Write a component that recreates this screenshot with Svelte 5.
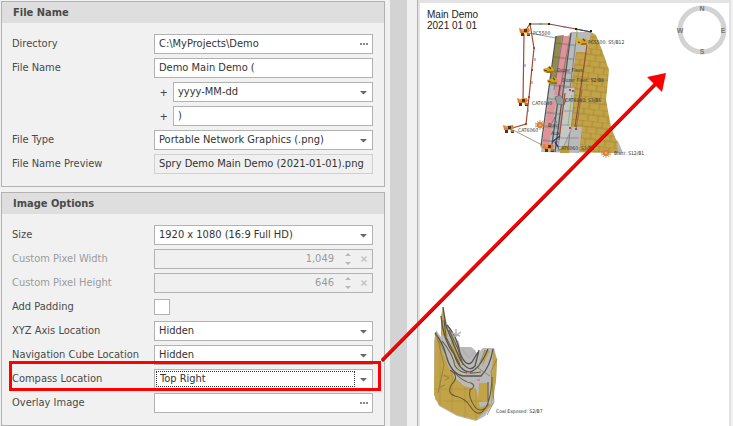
<script>
  let directory = $state('C:\\MyProjects\\Demo');
  let prefix = $state('Demo Main Demo (');
  let suffix = $state(')');
  let overlay = $state('');

  const locations = ['Hidden', 'Top Left', 'Top Right', 'Bottom Left', 'Bottom Right'];
  const placements = [
    { id: 'axis', label: 'XYZ Axis Location', value: 'Hidden' },
    { id: 'cube', label: 'Navigation Cube Location', value: 'Hidden' },
    { id: 'compass', label: 'Compass Location', value: 'Top Right', active: true }
  ];
  const customSizes = [
    { id: 'pixel-width', label: 'Custom Pixel Width', value: '1,049' },
    { id: 'pixel-height', label: 'Custom Pixel Height', value: '646' }
  ];

  const trucks = [[525, 32], [523, 102], [509, 129], [549, 148]];
  const dozers = [[549, 70], [553, 81], [583, 42]];
  const blasts = [[540, 125], [606, 153]];
  const tags = [
    [533, 35, 'PC5500'], [588, 44, 'PC5500: S5/B12'], [557, 72, 'Dozer Fleet'],
    [562, 82, 'Dozer Fleet: S2/B8'], [532, 105, 'CAT6040'], [565, 102, 'CAT6040: S3/B6'],
    [518, 132, 'CAT6060'], [548, 127, 'Blast'], [551, 135, 'Aux'],
    [558, 150, 'CAT6060: S3/B1'], [614, 155, 'Blast: S12/B1'], [496, 413, 'Coal Exposed: S2/B7']
  ];
</script>

{#snippet chevron()}
  <svg class="icon" viewBox="0 0 16 18" aria-hidden="true"><path d="M4 8h7l-3.500 3.500z" fill="#666" /></svg>
{/snippet}

{#snippet dots()}
  <button class="icon" type="button" aria-label="Browse">
    <svg viewBox="0 0 16 18" aria-hidden="true"><path d="M4 8h2v2h-2zM7 8h2v2h-2zM10 8h2v2h-2z" fill="#888" /></svg>
  </button>
{/snippet}

<div class="stage">
  <form class="options">
    <section>
      <h2>File Name</h2>
      <div class="rows">
        <div class="row">
          <label for="directory">Directory</label>
          <div class="field"><input id="directory" bind:value={directory} />{@render dots()}</div>
        </div>
        <div class="row">
          <label for="prefix">File Name</label>
          <div class="field"><input id="prefix" bind:value={prefix} /></div>
        </div>
        <div class="row">
          <label class="plus" for="date-format">+</label>
          <div class="field">
            <select id="date-format"><option>yyyy-MM-dd</option></select>{@render chevron()}
          </div>
        </div>
        <div class="row">
          <label class="plus" for="suffix">+</label>
          <div class="field"><input id="suffix" bind:value={suffix} /></div>
        </div>
        <div class="row">
          <label for="file-type">File Type</label>
          <div class="field">
            <select id="file-type"><option>Portable Network Graphics (.png)</option></select>{@render chevron()}
          </div>
        </div>
        <div class="row">
          <label for="preview">File Name Preview</label>
          <div class="field readonly"><input id="preview" readonly value="Spry Demo Main Demo (2021-01-01).png" /></div>
        </div>
      </div>
    </section>

    <section>
      <h2>Image Options</h2>
      <div class="rows">
        <div class="row">
          <label for="size">Size</label>
          <div class="field">
            <select id="size"><option>1920 x 1080 (16:9 Full HD)</option></select>{@render chevron()}
          </div>
        </div>
        {#each customSizes as item}
          <div class="row disabled">
            <label for={item.id}>{item.label}</label>
            <div class="field">
              <input id={item.id} disabled value={item.value} />
              <svg class="spin" viewBox="0 0 32 18" aria-hidden="true">
                <path d="M5 6h6l-3-3zM5 12h6l-3 3z" fill="#b8b8b8" />
                <path d="M21.500 6.500l5 5M26.500 6.500l-5 5" stroke="#c4c4c4" stroke-width="1.500" />
              </svg>
            </div>
          </div>
        {/each}
        <div class="row">
          <label for="padding">Add Padding</label>
          <input id="padding" class="check" type="checkbox" />
        </div>
        {#each placements as item}
          <div class="row">
            <label for={item.id}>{item.label}</label>
            <div class="field" class:active={item.active}>
              <select id={item.id} value={item.value}>
                {#each locations as place}<option>{place}</option>{/each}
              </select>{@render chevron()}
            </div>
            {#if item.active}<span class="highlight"></span>{/if}
          </div>
        {/each}
        <div class="row">
          <label for="overlay">Overlay Image</label>
          <div class="field"><input id="overlay" bind:value={overlay} />{@render dots()}</div>
        </div>
      </div>
    </section>
  </form>

  <div class="splitter"></div>

  <main>
    <div class="canvas">
      <p>Main Demo<br />2021 01 01</p>
      <svg class="scene" viewBox="420 3 309 423" preserveAspectRatio="xMinYMin meet" role="img" aria-label="Mine plan">
        <defs>
          <pattern id="blocks" width="10" height="12" patternUnits="userSpaceOnUse" patternTransform="rotate(7)">
            <path d="M0 0H10M3 0V6M0 6H10M8 6V12" fill="none" stroke="#8b7426" stroke-width=".5" />
          </pattern>
          <pattern id="cells" width="40" height="14" patternUnits="userSpaceOnUse" patternTransform="rotate(7)">
            <path d="M0 3H40" stroke="#555" stroke-width=".6" />
          </pattern>
        </defs>

        <!-- open pit strips -->
        <path d="M609 135L618 141L623 153H604Z" fill="#b5b5b5" />
        <path d="M577 32L591 32L596 35L602 50L609 70L606 100L611 127L617 142L618 153L561 152Z" fill="#c2a347" />
        <path d="M577 32L591 32L596 35L602 50L609 70L606 100L611 127L617 142L618 153L561 152Z" fill="url(#blocks)" />
        <path d="M571 32H591L587 52H576L566 127H582L579 153L541 152L542 145L556 36L568 36Z" fill="#b9babb" />
        <path d="M556 36L564 35L556 84L550 84Z" fill="#918b4d" />
        <path d="M562 36L570 36L562 95L554 95Z" fill="#df9297" />
        <path d="M549 101L556 101L549 145L542 145Z" fill="#df9297" />
        <path d="M556 36L570 36L571 32H577L561 152H541Z" fill="url(#cells)" />
        <path d="M556 36L541 146M571 33L555 152M560 85L551 152" fill="none" stroke="#555" stroke-width="1.300" />
        <path d="M563 36L554 90M570 37L559 95M577 33L562 152M574 88L568 151M582 90L576 130" fill="none" stroke="#666" stroke-width=".7" />
        <path d="M564 88L575 87L571 130L562 150L558 151Z" fill="#c5c6c7" stroke="#777" stroke-width=".5" />
        <path d="M565 99H573M564 111H572M562 125H570M560 138H579" stroke="#777" stroke-width=".6" />
        <path d="M555 97l5-2 3 4 3 1-2 5-7-1zM554 117l3 6M556 115l-4 8" fill="#999" stroke="#666" stroke-width=".7" />
        <path d="M561 146H570L569 153H560ZM540 147L546 144L546 150Z" fill="#b99a3d" />

        <!-- haul roads -->
        <path d="M530 24L549 24" stroke="#718348" stroke-width="1.200" />
        <path d="M549 24L576 29L591 32" fill="none" stroke="#8b4a39" stroke-width="1.200" />
        <path d="M576 29L591 32" stroke="#294d69" stroke-width="1.200" />
        <path d="M525 31L530 24L534 48L529 97L526 124L509 129M524 34L523 102M587 45L575 127M565 93L559 140" fill="none" stroke="#a14b2f" stroke-width="1.200" />
        <path d="M577 30L577 41M572 95L568 125" stroke="#94b84d" stroke-width="1" />
        <path d="M552 142L560 136M555 142L558 147" stroke="#263f83" stroke-width="1.500" />
        <path d="M525 64v3M535 58v3M532 81v3M528 109v3M582 85v3M539 24h3M563 27h3" stroke="#6677ee" stroke-width="1" />
        <path d="M534 47v2M532 69v2M529 96v2M526 123v2M569 90h2M572 91h2M569 128h2M575 129h2" stroke="#b92020" stroke-width="1.500" />
        <path d="M529 24h2M548 24h2M575 29h2M590 31h2" stroke="#222" stroke-width="2" />
        <path d="M529 33L556 38M513 130L542 145" stroke="#555" stroke-width=".6" />

        {#each trucks as [x, y]}
          <g transform="translate({x} {y})">
            <path d="M-6-4L-3-3L4-4L5-1L3 1H-5Z" fill="#e57f23" />
            <path d="M-4 1h3v3h-3zM2 1h3v3H2zM-1-3h3v3h-3z" fill="#493528" />
            <path d="M-4-2h3M1 2h4" stroke="#f6b25c" />
          </g>
        {/each}
        {#each dozers as [x, y]}
          <g transform="translate({x} {y})">
            <path d="M-6-1L-2-2L0-4L3-3L5-1L4 3H-2L-5 2Z" fill="#d3a11c" />
            <path d="M-2 2H4M0-3L2-1M-5 0L-2 1" stroke="#5c4716" stroke-width="1.200" />
          </g>
        {/each}
        <path d="M576 43L577 38L580 40L581 44" fill="none" stroke="#dbb020" stroke-width="1.500" />
        {#each blasts as [x, y]}
          <g transform="translate({x} {y})">
            <path d="M-5 0H5M0-5V5M-3-4L3 4M3-4L-3 4M-5-2L5 2M-5 2L5-2" stroke="#bd8052" stroke-width=".8" />
            <circle r="3" fill="#d77b35" /><circle r="1.500" fill="#f5a34f" />
          </g>
        {/each}

        <!-- coal seam -->
        <path d="M443 307L447 324L451 329L453 335L459 342L460 347H471L475 350L477 354L483 348H494L497 359L496 379L493 404L485 416L476 421L457 416L439 406L434 395L434 342L436 330L441 337L441 316Z" fill="#b9b9b9" />
        <path d="M443 307L446 328L448 337L441 335L441 318ZM435 332L443 345L449 367L455 378L464 386L476 389L480 407L491 404L493 348L497 360L496 381L491 406L476 420L457 415L439 405L434 394Z" fill="#c2a347" />
        <path d="M443 337L453 341L464 365L459 376L450 370L441 347Z" fill="#b9b9b9" />
        <path d="M451 330L456 349L460 359L459 369L451 345ZM479 383L488 383L487 402L478 402ZM485 350L490 351L482 367Z" fill="#c2a347" />
        <path d="M440 376H452M435 389H476M445 401H482M440 347V405M452 370V412M465 387V418M476 389V419" stroke="#a78c3c" stroke-width=".5" />
        <g class="seams">
          <path d="M443 307L446 326L451 338Q458 355 461 361Q469 373 475 366L479 350M441 316Q443 340 454 354Q460 372 470 372Q479 370 488 349M447 325Q457 336 460 353Q466 368 472 362L478 352M435 333Q443 343 446 355Q451 374 463 376L481 376Q490 367 493 349" stroke="#55534d" stroke-width="1.300" />
          <path d="M444 320L446 337L460 365M442 341Q453 354 455 366Q461 376 481 372M449 330L458 349L463 365M450 370Q460 376 452 384Q446 393 455 396Q465 398 470 406Q476 416 482 412Q491 405 492 377M454 372Q463 382 471 383Q477 386 470 390Q468 397 475 407Q481 414 488 405L488 382" stroke="#665c36" stroke-width="1.100" />
          <path d="M497 359L491 371L494 402L487 415M485 350L478 368L490 376M436 332L444 365L438 393M438 340L448 359M444 375l5 3-4 2M440 387l5-2" stroke="#807243" stroke-width=".7" />
        </g>
        <path d="M456 329v8M452 333l8 3M453 337l8-5M462 349l7 9 6-6" fill="none" stroke="#b0b0b0" stroke-width="1.400" />
        <path d="M467 372h3v2h-3zM477 379h3v2h-3zM435 396l2 6-2-3z" fill="#df7e91" />

        {#each tags as [x, y, text]}<text {x} {y}>{text}</text>{/each}

        <!-- compass -->
        <circle cx="702" cy="30" r="22" fill="none" stroke="#d3d3d3" stroke-width="5" />
        <g class="compass">
          <text x="702" y="11">N</text><text x="723" y="33">E</text>
          <text x="702" y="54">S</text><text x="680" y="33">W</text>
        </g>
      </svg>
    </div>
  </main>

  <svg class="arrow" viewBox="0 0 733 426" preserveAspectRatio="none" aria-hidden="true">
    <path d="M382 361L656 84" stroke="#511" stroke-width="3" />
    <path d="M382 360L656 83" stroke="#f00" stroke-width="3" />
    <path d="M666 73L647 77L662 92Z" fill="#f00" />
  </svg>
</div>

<style>
  :global(body) { margin: 0; background: #f1f1f1; }
  .stage {
    position: relative;
    display: grid;
    grid-template-columns: 390fr 17px 326fr;
    min-height: 100vh;
    background: #f1f1f1;
    color: #4a4a4a;
    font: 11px/18px "DejaVu Sans Condensed", Tahoma, sans-serif;
  }
  .options { display: flex; flex-direction: column; gap: 5px; min-width: 0; padding: 1px 5px 0 1px; }
  section { border: 1px solid #b2b2b2; }
  h2 { margin: 0; padding: 0 11px; background: #dedede; font-size: 11px; font-weight: bold; line-height: 21px; }
  .rows { display: flex; flex-direction: column; gap: 4px; padding: 11px 11px 12px 10px; }
  .row { position: relative; display: flex; align-items: center; height: 20px; }
  label { flex: 0 0 142px; white-space: nowrap; }
  .plus { flex-basis: 161px; box-sizing: border-box; padding-left: 148px; font-family: "Noto Sans", sans-serif; font-size: 13px; }
  .field { display: flex; flex: 1; min-width: 0; height: 18px; border: 1px solid #b2b2b2; background: #fff; }
  input, select {
    flex: 1;
    min-width: 0;
    margin: 0;
    padding: 0 4px;
    border: 0;
    outline: 0;
    background: none;
    color: #333;
    font: inherit;
    appearance: none;
  }
  .icon { flex: 0 0 16px; width: 16px; height: 18px; margin: 0; padding: 0; border: 0; background: none; }
  .icon svg { display: block; }
  .spin { flex: 0 0 32px; height: 18px; }
  .readonly { border-color: #d0d0d0; background: #f0f0f0; }
  .disabled label { color: #9b9b9b; }
  .disabled .field { background: #f0f0f0; }
  .disabled input { padding-right: 6px; color: #9b9b9b; text-align: right; }
  .check { flex: 0 0 16px; box-sizing: border-box; height: 16px; border: 1px solid #b2b2b2; background: #fff; }
  .active select { margin: 1px; padding: 0 3px; border: 1px dotted #333; line-height: 14px; }
  .highlight { position: absolute; z-index: 1; inset: -8px -8px -2px -3px; border: 3px solid #f00; pointer-events: none; }
  .splitter { background: #d3d3d3; }
  main { display: flex; min-width: 0; padding-left: 11px; padding-right: 2px; }
  .canvas { position: relative; flex: 1; border: solid #e3e3e3; border-width: 3px 2px 0 2px; background: #fff; box-shadow: -1px 0 #b2b2b2; }
  .canvas p { position: absolute; margin: 0; top: 6px; left: 7px; color: #222; font: 10px/11px "Liberation Sans", Arial, sans-serif; }
  .scene { display: block; width: 100%; }
  .scene text { fill: #333; font: 5px "DejaVu Sans Condensed", sans-serif; }
  .scene .compass text { fill: #777; font: bold 7px "Liberation Sans", sans-serif; text-anchor: middle; }
  .seams { fill: none; stroke-linejoin: round; }
  .arrow { position: absolute; inset: 0; width: 100%; height: 100%; pointer-events: none; }
</style>
